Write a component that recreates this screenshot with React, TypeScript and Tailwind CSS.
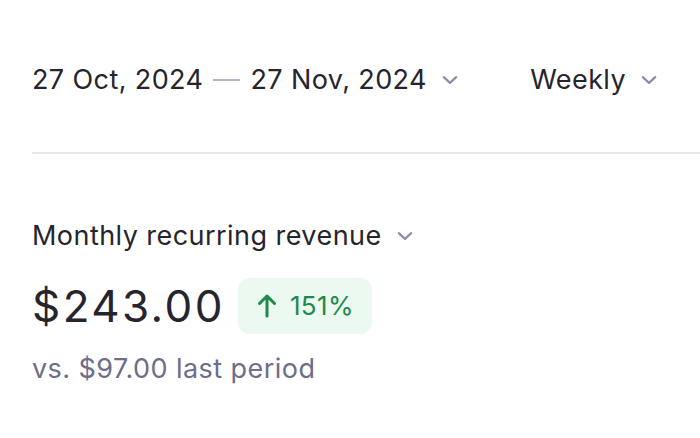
import React from 'react';

function Chevron({ className = '' }: { className?: string }) {
  return (
    <svg viewBox="0 0 16 16" className={`w-[18px] h-[18px] ${className}`} fill="none" stroke="currentColor" strokeWidth={2} strokeLinecap="round" strokeLinejoin="round">
      <path d="M2.5 5.5 8 10.5 13.5 5.5" />
    </svg>
  );
}

export default function App() {
  return (
    <div className="w-[700px] h-[438px] bg-white overflow-hidden text-[#26252e]" style={{ fontFamily: 'Inter, "Liberation Sans", sans-serif' }}>
      {/* Date range + interval */}
      <div className="flex items-center h-[152px] pl-8 pr-[42px]">
        <div className="flex items-center mt-[8px]">
          <span className="text-[27px] tracking-[0.4px]">27 Oct, 2024</span>
          <span className="mx-[10px] w-[27px] h-[2px] bg-[#b6b4c8]" />
          <span className="text-[27px] tracking-[0.4px]">27 Nov, 2024</span>
          <Chevron className="ml-[14px] text-[#8e8ca8]" />
        </div>
        <div className="ml-auto flex items-center mt-[8px]">
          <span className="text-[27px] tracking-[0.4px]">Weekly</span>
          <Chevron className="ml-[14px] text-[#8e8ca8]" />
        </div>
      </div>
      <div className="ml-8 h-[2px] bg-[#e7e7ee]" />

      {/* Metric */}
      <div className="pl-8 pt-[62px]">
        <div className="flex items-center">
          <span className="text-[27px] tracking-[0.45px]">Monthly recurring revenue</span>
          <Chevron className="ml-[14px] text-[#8e8ca8]" />
        </div>
        <div className="flex items-center mt-[21px]">
          <span className="text-[44px] leading-none tracking-[2.4px]">$243.00</span>
          <div className="ml-[13px] h-[56px] pl-[19px] pr-[18px] rounded-[12px] bg-[#ebf9f1] flex items-center gap-[13px] text-[#1f8a4c]">
            <svg viewBox="0 0 20 25" className="w-[20px] h-[25px]" fill="none" stroke="currentColor" strokeWidth={3} strokeLinecap="round" strokeLinejoin="round">
              <path d="M10 23V3M2.5 10.5 10 3l7.5 7.5" />
            </svg>
            <span className="text-[26px] tracking-[0.4px]">151%</span>
          </div>
        </div>
        <div className="mt-[15px] text-[27px] tracking-[0.45px] text-[#6e6d8a]">vs. $97.00 last period</div>
      </div>
    </div>
  );
}
